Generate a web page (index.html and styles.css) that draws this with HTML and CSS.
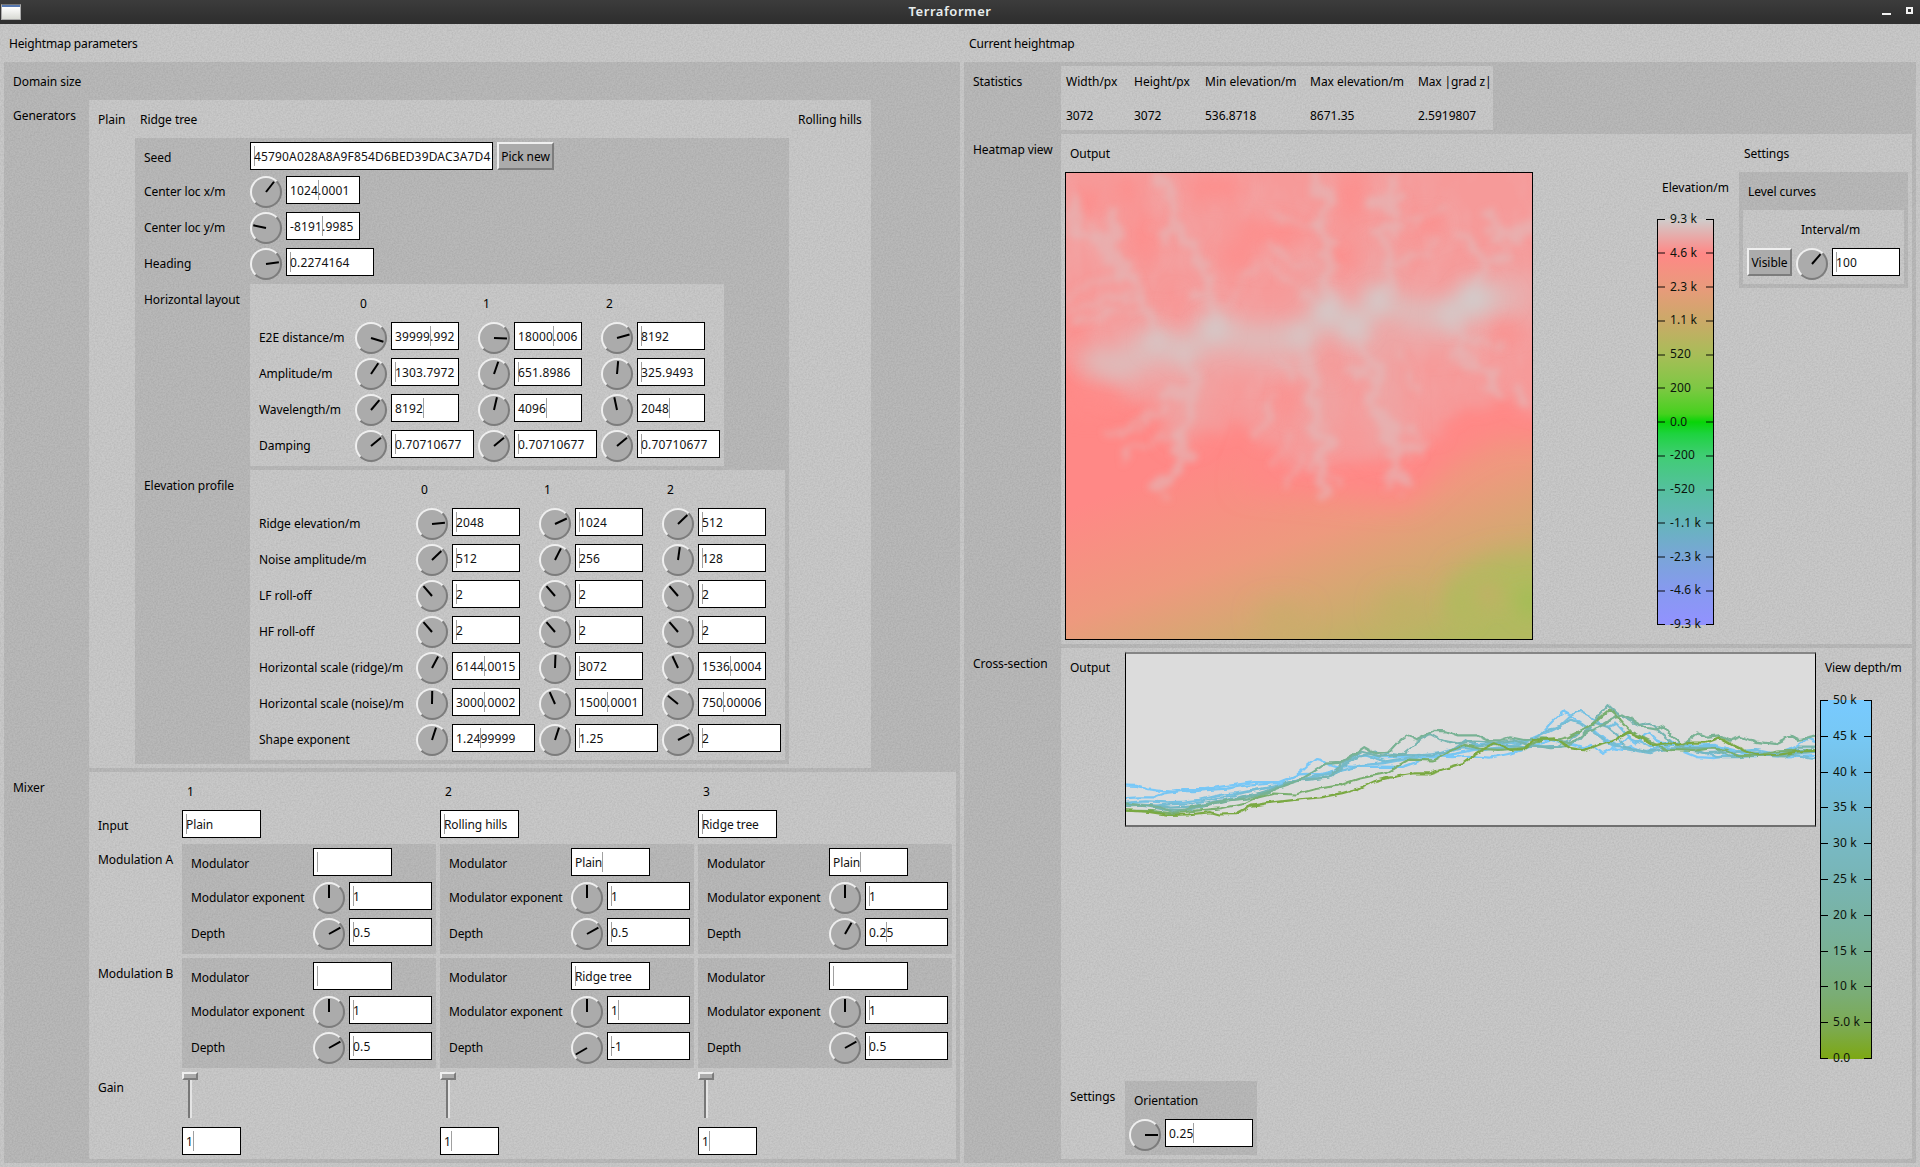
FILE: index.html
```html
<!DOCTYPE html>
<html lang="en">
<head>
<meta charset="utf-8">
<title>Terraformer</title>
<link rel="stylesheet" href="styles.css">
</head>
<body>
<header class="titlebar">
  <span class="appicon"></span>
  <h1>Terraformer</h1>
  <span class="winbtns"><i class="min"></i><i class="max"></i></span>
</header>
<main class="root">
  <section class="side">
    <h2 class="l">Heightmap parameters</h2>
    <div class="dark params">
      <span class="l">Domain size</span><span></span>
      <span class="l">Generators</span>
      <div class="light generators">
        <span class="l">Plain</span><span class="l">Ridge tree</span><span class="l">Rolling hills</span>
        <div class="dark ridge">
          <span class="l">Seed</span><div class="w"><span class="f seed"><b></b>45790A028A8A9F854D6BED39DAC3A7D4</span><button class="btn pick">Pick new</button></div>
          <span class="l">Center loc x/m</span><div class="w"><i class="dial" style="--a:38deg"></i><span class="f w74">1024<b></b>.0001</span></div>
          <span class="l">Center loc y/m</span><div class="w"><i class="dial" style="--a:-78deg"></i><span class="f w74">-8191<b></b>.9985</span></div>
          <span class="l">Heading</span><div class="w"><i class="dial" style="--a:82deg"></i><span class="f w88"><b></b>0.2274164</span></div>
          <span class="l">Horizontal layout</span>
          <div class="light horiz">
            <span></span><span class="l">0</span><span class="l">1</span><span class="l">2</span>
            <span class="l">E2E distance/m</span>
            <div class="w"><i class="dial" style="--a:107deg"></i><span class="f">39999<b></b>.992</span></div>
            <div class="w"><i class="dial" style="--a:92deg"></i><span class="f">18000<b></b>.006</span></div>
            <div class="w"><i class="dial" style="--a:74deg"></i><span class="f"><b></b>8192</span></div>
            <span class="l">Amplitude/m</span>
            <div class="w"><i class="dial" style="--a:34deg"></i><span class="f"><b></b>1303.7972</span></div>
            <div class="w"><i class="dial" style="--a:19deg"></i><span class="f"><b></b>651.8986</span></div>
            <div class="w"><i class="dial" style="--a:5deg"></i><span class="f"><b></b>325.9493</span></div>
            <span class="l">Wavelength/m</span>
            <div class="w"><i class="dial" style="--a:40deg"></i><span class="f">8192<b></b></span></div>
            <div class="w"><i class="dial" style="--a:13deg"></i><span class="f">4096<b></b></span></div>
            <div class="w"><i class="dial" style="--a:-12deg"></i><span class="f">2048<b></b></span></div>
            <span class="l">Damping</span>
            <div class="w"><i class="dial" style="--a:50deg"></i><span class="f w83"><b></b>0.70710677</span></div>
            <div class="w"><i class="dial" style="--a:50deg"></i><span class="f w83"><b></b>0.70710677</span></div>
            <div class="w"><i class="dial" style="--a:50deg"></i><span class="f w83"><b></b>0.70710677</span></div>
          </div>
          <span class="l">Elevation profile</span>
          <div class="light elev">
            <span></span><span class="l">0</span><span class="l">1</span><span class="l">2</span>
            <span class="l">Ridge elevation/m</span>
            <div class="w"><i class="dial" style="--a:84deg"></i><span class="f"><b></b>2048</span></div>
            <div class="w"><i class="dial" style="--a:65deg"></i><span class="f"><b></b>1024</span></div>
            <div class="w"><i class="dial" style="--a:46deg"></i><span class="f"><b></b>512</span></div>
            <span class="l">Noise amplitude/m</span>
            <div class="w"><i class="dial" style="--a:46deg"></i><span class="f"><b></b>512</span></div>
            <div class="w"><i class="dial" style="--a:27deg"></i><span class="f"><b></b>256</span></div>
            <div class="w"><i class="dial" style="--a:8deg"></i><span class="f"><b></b>128</span></div>
            <span class="l">LF roll-off</span>
            <div class="w"><i class="dial" style="--a:-41deg"></i><span class="f"><b></b>2</span></div>
            <div class="w"><i class="dial" style="--a:-41deg"></i><span class="f"><b></b>2</span></div>
            <div class="w"><i class="dial" style="--a:-41deg"></i><span class="f"><b></b>2</span></div>
            <span class="l">HF roll-off</span>
            <div class="w"><i class="dial" style="--a:-41deg"></i><span class="f"><b></b>2</span></div>
            <div class="w"><i class="dial" style="--a:-41deg"></i><span class="f"><b></b>2</span></div>
            <div class="w"><i class="dial" style="--a:-41deg"></i><span class="f"><b></b>2</span></div>
            <span class="l">Horizontal scale (ridge)/m</span>
            <div class="w"><i class="dial" style="--a:28deg"></i><span class="f">6144<b></b>.0015</span></div>
            <div class="w"><i class="dial" style="--a:2deg"></i><span class="f"><b></b>3072</span></div>
            <div class="w"><i class="dial" style="--a:-25deg"></i><span class="f">1536<b></b>.0004</span></div>
            <span class="l">Horizontal scale (noise)/m</span>
            <div class="w"><i class="dial" style="--a:1deg"></i><span class="f">3000<b></b>.0002</span></div>
            <div class="w"><i class="dial" style="--a:-24deg"></i><span class="f">1500<b></b>.0001</span></div>
            <div class="w"><i class="dial" style="--a:-51deg"></i><span class="f">750<b></b>.00006</span></div>
            <span class="l">Shape exponent</span>
            <div class="w"><i class="dial" style="--a:18deg"></i><span class="f w83">1.24<b></b>99999</span></div>
            <div class="w"><i class="dial" style="--a:18deg"></i><span class="f w83"><b></b>1.25</span></div>
            <div class="w"><i class="dial" style="--a:62deg"></i><span class="f w83"><b></b>2</span></div>
          </div>
        </div>
      </div>
      <span class="l">Mixer</span>
      <div class="light mixer">
        <span></span><span class="l">1</span><span class="l">2</span><span class="l">3</span>
        <span class="l">Input</span>
        <div class="w"><span class="f w79 txt"><b></b>Plain</span></div>
        <div class="w"><span class="f w79 txt"><b></b>Rolling hills</span></div>
        <div class="w"><span class="f w79 txt"><b></b>Ridge tree</span></div>
        <span class="l">Modulation A</span>
        <div class="dark mod">
          <span class="l">Modulator</span><div class="w"><span class="f w79 txt"><b></b></span></div>
          <span class="l">Modulator exponent</span><div class="w"><i class="dial" style="--a:0deg"></i><span class="f w83"><b></b>1</span></div>
          <span class="l">Depth</span><div class="w"><i class="dial" style="--a:61deg"></i><span class="f w83"><b></b>0.5</span></div>
        </div>
        <div class="dark mod">
          <span class="l">Modulator</span><div class="w"><span class="f w79 txt">Plain<b></b></span></div>
          <span class="l">Modulator exponent</span><div class="w"><i class="dial" style="--a:0deg"></i><span class="f w83"><b></b>1</span></div>
          <span class="l">Depth</span><div class="w"><i class="dial" style="--a:61deg"></i><span class="f w83"><b></b>0.5</span></div>
        </div>
        <div class="dark mod">
          <span class="l">Modulator</span><div class="w"><span class="f w79 txt">Plain<b></b></span></div>
          <span class="l">Modulator exponent</span><div class="w"><i class="dial" style="--a:0deg"></i><span class="f w83"><b></b>1</span></div>
          <span class="l">Depth</span><div class="w"><i class="dial" style="--a:30deg"></i><span class="f w83">0.2<b></b>5</span></div>
        </div>
        <span class="l">Modulation B</span>
        <div class="dark mod">
          <span class="l">Modulator</span><div class="w"><span class="f w79 txt"><b></b></span></div>
          <span class="l">Modulator exponent</span><div class="w"><i class="dial" style="--a:0deg"></i><span class="f w83"><b></b>1</span></div>
          <span class="l">Depth</span><div class="w"><i class="dial" style="--a:61deg"></i><span class="f w83"><b></b>0.5</span></div>
        </div>
        <div class="dark mod">
          <span class="l">Modulator</span><div class="w"><span class="f w79 txt"><b></b>Ridge tree</span></div>
          <span class="l">Modulator exponent</span><div class="w"><i class="dial" style="--a:0deg"></i><span class="f w83">1<b></b></span></div>
          <span class="l">Depth</span><div class="w"><i class="dial" style="--a:-120deg"></i><span class="f w83"><b></b>-1</span></div>
        </div>
        <div class="dark mod">
          <span class="l">Modulator</span><div class="w"><span class="f w79 txt"><b></b></span></div>
          <span class="l">Modulator exponent</span><div class="w"><i class="dial" style="--a:0deg"></i><span class="f w83"><b></b>1</span></div>
          <span class="l">Depth</span><div class="w"><i class="dial" style="--a:61deg"></i><span class="f w83"><b></b>0.5</span></div>
        </div>
        <span class="l">Gain</span>
        <div class="gain"><i class="knob"></i><i class="track"></i><span class="f w59">1<b></b></span></div>
        <div class="gain"><i class="knob"></i><i class="track"></i><span class="f w59">1<b></b></span></div>
        <div class="gain"><i class="knob"></i><i class="track"></i><span class="f w59">1<b></b></span></div>
      </div>
    </div>
  </section>

  <section class="side">
    <h2 class="l">Current heightmap</h2>
    <div class="dark current">
      <span class="l">Statistics</span>
      <div class="light stats">
        <span>Width/px</span><span>Height/px</span><span>Min elevation/m</span><span>Max elevation/m</span><span>Max |grad z|</span>
        <span>3072</span><span>3072</span><span>536.8718</span><span>8671.35</span><span>2.5919807</span>
      </div>
      <span class="l">Heatmap view</span>
      <div class="light heatview">
        <span class="l">Output</span><span class="l">Settings</span>
        <div class="heatrow">
          <svg class="heatmap" viewBox="33 39 1398 1398">
            <defs>
              <linearGradient id="land" gradientUnits="userSpaceOnUse" x1="0" y1="1060" x2="250" y2="1776">
                <stop offset="0" stop-color="#ff8886"/><stop offset=".42" stop-color="#ee997e"/>
                <stop offset=".64" stop-color="#d8a673"/><stop offset=".84" stop-color="#c3b068"/><stop offset="1" stop-color="#b2b960"/>
              </linearGradient>
              <filter id="rough" x="-50" y="-50" width="1570" height="1570" filterUnits="userSpaceOnUse">
                <feTurbulence type="fractalNoise" baseFrequency=".02" numOctaves="4" seed="7" result="n"/>
                <feDisplacementMap in="SourceGraphic" in2="n" scale="75" xChannelSelector="R" yChannelSelector="G"/>
                <feGaussianBlur stdDeviation="10"/>
              </filter>
              <filter id="edge" x="-100" y="-100" width="1700" height="1700" filterUnits="userSpaceOnUse">
                <feTurbulence type="fractalNoise" baseFrequency=".014" numOctaves="4" seed="3" result="n"/>
                <feDisplacementMap in="SourceGraphic" in2="n" scale="120" xChannelSelector="R" yChannelSelector="G"/>
                <feGaussianBlur stdDeviation="20"/>
              </filter>
              <filter id="soft" x="-100" y="-100" width="1700" height="1700" filterUnits="userSpaceOnUse"><feGaussianBlur stdDeviation="28"/></filter>
              <filter id="softer" x="-200" y="-200" width="1900" height="1900" filterUnits="userSpaceOnUse"><feGaussianBlur stdDeviation="40"/></filter>
              <filter id="mottle" x="-100" y="-100" width="1700" height="1700" filterUnits="userSpaceOnUse">
                <feGaussianBlur in="SourceGraphic" stdDeviation="45" result="m"/>
                <feTurbulence type="fractalNoise" baseFrequency=".012 .006" numOctaves="3" seed="11"/>
                <feColorMatrix values="0 0 0 0 .85  0 0 0 0 .45  0 0 0 0 .45  2.4 0 0 0 -.9"/>
                <feComposite in2="m" operator="in"/>
              </filter>
            </defs>
            <rect x="30" y="36" width="1404" height="1404" fill="url(#land)"/>
            <g filter="url(#softer)">
              <path d="M560 980 850 1010 1060 1030 1200 900 1330 830 1540 840 1540 600 1000 690 600 850Z" fill="#ff8886"/>
              <path d="M1200 1240 1330 1190 1540 1180 1540 1400 1330 1350 1210 1400Z" fill="#b2ba5e"/>
              <ellipse cx="680" cy="1370" rx="70" ry="30" fill="#c7ad69"/>
              <ellipse cx="1040" cy="1340" rx="60" ry="35" fill="#bdb264"/>
            </g>
            <g filter="url(#soft)">
              <ellipse cx="1425" cy="1325" rx="40" ry="45" fill="#a2be54"/>
              <ellipse cx="1300" cy="1300" rx="30" ry="28" fill="#caaa6b"/>
              <ellipse cx="1215" cy="1330" rx="40" ry="60" fill="#b3b95e"/>
            </g>
            <path d="M-40 -40H1540V780L1350 720 1260 750 1130 820 1080 880 900 890 840 930 720 920 640 850 480 800 390 840 250 730 120 680-40 580Z" fill="#f69a99" filter="url(#edge)"/>
            <path d="M-40 -40H1540V620L1300 650 1100 770 700 770 480 700 200 640-40 500Z" fill="#fff" filter="url(#mottle)" opacity=".3"/>
            <g filter="url(#softer)" fill="none" stroke-linecap="round" stroke-linejoin="round">
              <path d="M190 620 305 560 390 590 480 530 600 555 740 550 820 480 900 520 970 450 1080 480 1185 480 1260 430 1390 410" stroke="#e9aeae" stroke-width="150"/>
              <path d="M780 350 800 800M980 300 1000 850M420 620 390 800" stroke="#eda6a5" stroke-width="80"/>
            </g>
            <g filter="url(#soft)" fill="#ff8b89" opacity=".85">
              <ellipse cx="480" cy="80" rx="90" ry="40"/><ellipse cx="650" cy="220" rx="110" ry="40"/><ellipse cx="270" cy="230" rx="42" ry="80"/>
              <ellipse cx="890" cy="110" rx="35" ry="80"/><ellipse cx="855" cy="290" rx="40" ry="40"/><ellipse cx="100" cy="130" rx="45" ry="40"/>
              <ellipse cx="1110" cy="190" rx="60" ry="25"/><ellipse cx="60" cy="500" rx="30" ry="50"/><ellipse cx="545" cy="290" rx="50" ry="35"/>
              <ellipse cx="365" cy="440" rx="16" ry="55"/><ellipse cx="828" cy="600" rx="14" ry="65"/><ellipse cx="220" cy="90" rx="30" ry="50"/>
              <ellipse cx="100" cy="720" rx="110" ry="50"/><ellipse cx="700" cy="720" rx="20" ry="60"/><ellipse cx="1350" cy="510" rx="35" ry="35"/>
            </g>
            <g filter="url(#soft)" fill="none" stroke-linecap="round" stroke-linejoin="round">
              <path d="M110 600 200 620 305 550 390 580 480 510 600 540 740 530 820 455 900 505 970 425 1080 460 1185 465 1260 415 1340 415" stroke="#dcbdbc" stroke-width="50"/>
            </g>
            <g filter="url(#rough)" fill="none" stroke="#e3b8b7" stroke-linecap="round" stroke-linejoin="round">
              <g stroke-width="34" opacity=".6">
                <path d="M305 50 360 110 370 210 430 290 460 370 480 510M350 215 320 225M480 420 420 410"/>
                <path d="M50 120 60 200 150 250 170 320 250 370 290 480 305 545M180 170 170 320M205 290 200 350"/>
                <path d="M770 50 815 130 790 200 830 250 810 350 820 460"/>
                <path d="M1010 60 1000 140 1020 190 960 220 1000 270 1010 350 975 425M960 130 1050 120"/>
                <path d="M1230 220 1280 310 1260 415M1430 180 1380 240 1320 220 1310 160M1280 310 1370 290"/>
                <path d="M390 580 420 660 410 740 370 830 390 890 350 960 310 970M420 690 330 700M370 870 420 890"/>
                <path d="M740 530 760 620 780 740 770 800 840 850 790 900 810 990M720 640 690 620"/>
                <path d="M900 505 940 590 970 670 950 730 1010 810 1020 920 1060 980M900 640 940 600M1010 860 1100 880"/>
                <path d="M1185 465 1230 540 1220 600 1310 640 1320 700M1390 700 1410 720"/>
              </g>
              <g stroke-width="16" opacity=".5">
                <path d="M640 250 720 320 780 330M640 320 700 370 770 410M650 160 740 200 790 200M600 310 560 380 500 440M1150 230 1100 290 1020 310M1150 150 1080 190 1020 190"/>
                <path d="M40 410 120 370 200 350M40 460 150 410 240 410M60 490 160 450 270 460"/>
                <path d="M660 700 630 780 600 830M330 740 220 810 150 830M360 830 270 850 210 890M700 830 650 930M740 900 690 980M820 950 860 970M1010 930 990 980M1060 810 1130 850M320 1000 330 1020"/>
                <path d="M1040 570 1060 640 1090 700M1250 540 1350 560"/>
              </g>
            </g>
            <g filter="url(#soft)" fill="#d0cecd">
              <circle cx="305" cy="542" r="28"/><circle cx="388" cy="578" r="24"/><circle cx="480" cy="505" r="36"/><circle cx="735" cy="528" r="28"/><circle cx="818" cy="450" r="38"/>
              <circle cx="898" cy="502" r="34"/><circle cx="970" cy="418" r="36"/><circle cx="1185" cy="465" r="32"/><circle cx="1258" cy="415" r="44"/>
            </g>
          </svg>
          <div class="legend">
            <span class="cap">Elevation/m</span>
            <div class="bar elevbar">
              <span class="t"><u>9.3 k</u></span><span class="t"><u>4.6 k</u></span><span class="t"><u>2.3 k</u></span><span class="t"><u>1.1 k</u></span><span class="t"><u>520</u></span><span class="t"><u>200</u></span><span class="t"><u>0.0</u></span><span class="t"><u>-200</u></span><span class="t"><u>-520</u></span><span class="t"><u>-1.1 k</u></span><span class="t"><u>-2.3 k</u></span><span class="t"><u>-4.6 k</u></span><span class="t"><u>-9.3 k</u></span>
            </div>
          </div>
        </div>
        <div class="dark level">
          <span class="l">Level curves</span>
          <div class="light interval">
            <span></span><span class="cap">Interval/m</span>
            <button class="btn">Visible</button>
            <div class="w"><i class="dial" style="--a:41deg"></i><span class="f"><b></b>100</span></div>
          </div>
        </div>
      </div>
      <span class="l">Cross-section</span>
      <div class="light cross">
        <span class="l">Output</span>
        <div class="crossrow">
          <svg class="chart" viewBox="127 38 1252 521" preserveAspectRatio="none">
            <defs>
              <filter id="jag" x="100" y="0" width="1300" height="600" filterUnits="userSpaceOnUse">
                <feTurbulence type="fractalNoise" baseFrequency=".05" numOctaves="2" seed="5" result="n"/>
                <feDisplacementMap in="SourceGraphic" in2="n" scale="13" xChannelSelector="R" yChannelSelector="G"/>
              </filter>
            </defs>
            <g fill="none" stroke-width="2.2" stroke-linejoin="round" filter="url(#jag)">
              <path stroke="#78c8f8" d="M118 438 145 440 165 450 190 455 215 457 240 450 270 450 300 442 330 435 360 428 405 428 420 418 440 403 455 380 472 358 480 360 495 375 515 385 530 370 545 350 560 348 575 352 600 352 630 350 660 345 690 350 720 352 750 348 790 354 830 340 860 320 880 310 900 300 925 310 945 318 960 325 972 315 992 342 1010 325 1030 330 1045 318 1062 335 1085 330 1115 300 1140 335 1165 352 1195 355 1230 345 1270 350 1300 340 1330 350 1390 345"/>
              <path stroke="#77c6f3" d="M118 478 150 475 175 475 195 463 230 455 250 456 280 452 310 448 340 440 365 437 390 432 410 432 425 415 440 405 455 403 480 404 500 398 520 380 545 382 580 381 630 382 650 370 670 355 700 350 730 340 760 330 800 325 835 320 860 300 880 285 895 255 910 230 922 213 935 225 955 250 970 268 985 280 1000 300 1015 320 1028 310 1040 290 1055 310 1070 285 1078 278 1090 300 1110 315 1150 318 1195 315 1230 330 1260 345 1310 350 1345 320 1365 296 1390 310"/>
              <path stroke="#76c1e2" d="M118 492 165 487 200 490 230 488 260 482 300 466 330 462 370 450 400 442 425 428 460 415 500 400 530 388 560 376 600 370 640 358 680 348 720 330 750 318 800 310 840 305 875 292 895 275 915 258 940 220 953 212 970 225 985 245 1005 260 1018 250 1040 290 1060 305 1090 325 1130 310 1165 320 1190 318 1230 335 1270 330 1300 340 1340 330 1390 330"/>
              <path stroke="#76bdd4" d="M118 498 170 502 205 496 250 492 290 478 325 468 355 455 400 440 440 422 475 410 510 400 530 365 560 345 600 365 650 350 700 340 740 325 780 330 830 315 870 300 890 270 912 262 935 238 955 250 975 275 1000 305 1035 328 1080 340 1110 325 1160 330 1200 352 1240 352 1290 345 1330 342 1390 358"/>
              <path stroke="#75b8c4" d="M118 494 170 498 210 506 250 502 290 488 330 476 370 462 410 438 450 422 500 412 520 380 545 355 580 335 620 345 680 348 715 335 745 300 765 320 800 312 850 322 910 318 930 300 955 270 980 248 1002 260 1020 285 1030 320 1075 335 1100 330 1130 325 1180 340 1250 335 1310 345 1390 335"/>
              <path stroke="#77b5b0" d="M118 503 160 500 200 513 240 512 290 492 330 478 380 458 420 430 455 420 495 415 520 370 555 335 590 350 630 345 645 325 660 300 680 282 700 300 725 310 760 305 800 308 830 300 860 315 900 325 930 318 950 300 975 250 1002 194 1015 215 1035 232 1060 255 1080 248 1100 280 1120 310 1145 325 1195 325 1225 350 1280 348 1325 350 1350 320 1390 320"/>
              <path stroke="#78b294" d="M118 492 150 498 190 505 215 520 260 500 310 484 350 478 380 462 410 442 440 425 465 400 490 372 515 370 540 345 560 322 580 340 605 335 620 308 637 287 655 298 685 272 710 274 730 286 765 286 785 302 810 300 825 292 850 300 885 295 910 298 930 310 945 300 965 275 985 262 1005 242 1030 222 1050 240 1070 262 1090 268 1105 258 1120 290 1140 315 1165 280 1180 290 1205 286 1225 302 1245 290 1270 305 1305 312 1335 287 1350 300 1390 286"/>
              <path stroke="#79af70" d="M118 515 175 517 215 524 250 516 300 508 340 495 365 475 395 463 435 466 470 450 510 440 550 418 600 400 640 360 685 362 710 340 740 315 770 326 800 330 850 325 880 300 910 300 930 290 955 270 980 245 1006 208 1022 232 1045 275 1075 300 1110 330 1160 333 1190 326 1215 330 1240 350 1280 345 1310 335 1390 330"/>
              <path stroke="#7aa943" d="M118 514 165 518 205 528 240 527 280 520 295 527 325 526 355 500 395 490 430 483 480 475 520 462 550 448 580 425 605 415 650 402 680 402 710 385 740 370 760 345 780 325 797 310 825 330 850 328 870 300 905 295 935 325 960 331 985 315 1015 300 1040 275 1060 290 1085 316 1110 310 1130 314 1155 308 1180 308 1205 292 1230 315 1255 335 1275 347 1310 345 1350 335 1390 332"/>
            </g>
          </svg>
          <div class="legend2">
            <span class="l">View depth/m</span>
            <div class="bar depthbar">
              <span class="t"><u>50 k</u></span><span class="t"><u>45 k</u></span><span class="t"><u>40 k</u></span><span class="t"><u>35 k</u></span><span class="t"><u>30 k</u></span><span class="t"><u>25 k</u></span><span class="t"><u>20 k</u></span><span class="t"><u>15 k</u></span><span class="t"><u>10 k</u></span><span class="t"><u>5.0 k</u></span><span class="t"><u>0.0</u></span>
            </div>
          </div>
        </div>
        <span class="l">Settings</span>
        <div class="dark orient">
          <span class="l">Orientation</span>
          <div class="w"><i class="dial" style="--a:90deg"></i><span class="f w88">0.25<b></b></span></div>
        </div>
      </div>
    </div>
  </section>
</main>
</body>
</html>
```
FILE: styles.css
```css
:root {
  --grain: url("data:image/svg+xml,%3Csvg xmlns='http://www.w3.org/2000/svg' width='256' height='256'%3E%3Cfilter id='g' x='0' y='0' width='100%25' height='100%25'%3E%3CfeTurbulence type='fractalNoise' baseFrequency='.6' numOctaves='3' stitchTiles='stitch'/%3E%3CfeColorMatrix values='0 0 0 0 0 0 0 0 0 0 0 0 0 0 0 .13 0 0 0 -.04'/%3E%3C/filter%3E%3Crect width='256' height='256' filter='url(%23g)'/%3E%3C/svg%3E");
}
* { box-sizing: border-box; }
body {
  margin: 0;
  width: 1920px;
  height: 1167px;
  overflow: hidden;
  font: 12px/16px "Noto Sans", "Open Sans", sans-serif;
  color: #000;
  background: var(--grain) #c9c9c9;
}
.titlebar {
  height: 24px;
  display: flex;
  align-items: center;
  justify-content: space-between;
  padding: 0 7px 0 1px;
  background: linear-gradient(#3c3c3c, #303030 80%);
  color: #e9eeee;
}
.titlebar h1 { margin: 0 14px 2px 0; font-size: 13px; font-weight: 600; letter-spacing: .55px; }
.appicon { width: 20px; height: 16px; margin-right: 11px; border: 1px solid #aaa; border-top-color: #777; background: linear-gradient(#5577b0 0 2px, #fff 2px, #d8dad4); }
.winbtns { display: flex; align-items: flex-end; gap: 15px; height: 7px; margin-bottom: 3px; }
.min { width: 9px; height: 2px; background: #f2f2f2; margin-bottom: -1px; }
.max { width: 7px; height: 7px; border: 2px solid #f2f2f2; }

.root { display: grid; grid-template-columns: 960px 956px; height: 1143px; }
.side { display: grid; grid-template-rows: 34px 1105px; }
.dark, .light { display: grid; margin: 4px 0 0 4px; padding: 0 4px 4px 0; align-content: start; align-items: start; }
.dark { background: var(--grain) #b9b9b9; }
.light { background: var(--grain) #c9c9c9; }
.l { margin: 4px 0 0 4px; padding-left: 5px; height: 30px; font-size: 12px; font-weight: 400; line-height: 32px; white-space: nowrap; letter-spacing: -.05px; }
h2.l { letter-spacing: -.15px; }

.w { display: flex; gap: 4px; margin: 4px 0 0 4px; }
.f {
  display: flex;
  align-items: center;
  width: 68px;
  height: 28px;
  padding: 1px 0 0 3px;
  border: 1px solid #000;
  background: #fff;
  white-space: pre;
  color: #111;
  letter-spacing: .15px;
}
.f b { flex: none; width: 1px; height: 20px; margin: -1px -1px 0 0; background: #a0a0a0; }
.txt { letter-spacing: -.1px; }
.w59 { width: 59px; }
.w74 { width: 74px; }
.w79 { width: 79px; }
.w83 { width: 83px; }
.w88 { width: 88px; }
.seed { width: 243px; }
.btn {
  width: 45px;
  height: 28px;
  padding: 1px 0 0;
  border: 2px solid;
  border-color: #efefef #7c7c7c #7c7c7c #efefef;
  background: #ababab;
  color: #000;
  font: inherit;
  letter-spacing: -.05px;
  white-space: nowrap;
}
.pick { width: 57px; }
.dial {
  position: relative;
  flex: none;
  width: 32px;
  height: 32px;
  border: 2px solid;
  border-color: #efefef #7c7c7c #7c7c7c #efefef;
  border-radius: 50%;
  background: #ababab;
}
.dial::after {
  content: "";
  position: absolute;
  left: 13px;
  top: 1px;
  width: 2px;
  height: 13px;
  background: #000;
  transform: rotate(var(--a));
  transform-origin: 50% 100%;
}

.params { grid-template-columns: 81px 871px; grid-template-rows: 34px 672px 391px; }
.generators { grid-template-columns: 42px 658px 78px; grid-template-rows: 34px 630px; width: 782px; height: 668px; }
.ridge { grid-column: 2; grid-template-columns: 111px 539px; grid-template-rows: 34px 36px 36px 36px 186px 294px; height: 626px; }
.horiz { grid-template-columns: 101px repeat(3, 123px); grid-template-rows: 34px repeat(4, 36px); width: 474px; }
.elev { grid-template-columns: 162px repeat(3, 123px); grid-template-rows: 34px repeat(7, 36px); }
.mixer { grid-template-columns: 89px repeat(3, 258px); grid-template-rows: 34px 34px 114px 114px 87px; height: 387px; }
.mod { grid-template-columns: 127px 123px; grid-template-rows: 34px 36px 36px; }
.mod .l { letter-spacing: -.13px; }
.gain { display: flex; flex-direction: column; margin: 4px 0 0 4px; }
.knob { width: 16px; height: 8px; border: 2px solid; border-color: #efefef #7c7c7c #7c7c7c #efefef; background: #ababab; }
.track { width: 4px; height: 38px; margin: 0 0 9px 6px; border-left: 2px solid #777; border-right: 2px solid #e4e4e4; }

.current { grid-template-columns: 93px 855px; grid-template-rows: 68px 514px 515px; }
.stats { grid-template-columns: 68px 71px 105px 108px 75px; row-gap: 4px; width: 432px; padding: 0 0 0 5px; }
.stats span { height: 30px; line-height: 32px; white-space: nowrap; }
.stats span:nth-child(5) { letter-spacing: -.15px; }
.heatview { grid-template-columns: 674px 173px; grid-template-rows: 34px 472px; }
.heatrow { display: flex; margin: 4px 0 0 4px; }
.heatmap { width: 468px; height: 468px; border: 1px solid #000; }
.legend { margin-left: 124px; width: 71px; }
.cap { display: block; height: 47px; padding-left: 5px; line-height: 32px; white-space: nowrap; }
.bar { display: flex; flex-direction: column; justify-content: space-between; border: solid #000; border-width: 0 1px; }
.t { display: flex; align-items: center; height: 1px; white-space: pre; color: #0c140c; letter-spacing: .1px; }
.t u { margin-top: -1px; text-decoration: none; }
.t::before { content: ""; width: 7px; height: 2px; margin-right: 5px; background: #0007; }
.t::after { content: ""; width: 7px; height: 2px; margin-left: auto; background: #0007; }
.t:first-child::before, .t:first-child::after, .t:last-child::before, .t:last-child::after { height: 1px; background: #000; }
.elevbar {
  width: 57px;
  height: 406px;
  background: linear-gradient(#cfcdcc, #ff8886 8.5%, #e99a7c 16.7%, #cba968 25%, #a8bd58 33.3%, #7dc843 41.7%, #46d11e 48%, #08d408 50%, #1ed340 53%, #40cd74 58.3%, #55c09e 66.7%, #66b5bc 75%, #7aa5d8 83.3%, #8799f0 91.7%, #9292ff);
}
.level { grid-template-rows: 34px 78px; }
.interval { grid-template-columns: 49px 108px; grid-template-rows: 34px 36px; }
.interval .cap { height: 30px; padding-left: 9px; margin-top: 4px; }
.interval .btn { margin: 4px 0 0 4px; }

.cross { grid-template-columns: 60px 787px; grid-template-rows: 429px 78px; }
.crossrow { display: flex; margin: 4px 0 0 4px; }
.chart { width: 691px; height: 175px; border: 1px solid #000; border-top: 2px solid #858585; border-bottom: 2px solid #707070; background: #dcdcdc; }
.chart path { vector-effect: non-scaling-stroke; }
.legend2 { display: flex; flex-direction: column; margin-left: 4px; }
.legend2 .l { margin: 0 0 18px; letter-spacing: -.15px; }
.depthbar { width: 52px; height: 359px; background: linear-gradient(#78caff, #77c8f5 10%, #76c1e4 20%, #78bbcb 35%, #78b5b5 50%, #79b197 68%, #7aad75 82%, #7caa4c 92%, #7da812); }
.depthbar .t::before, .depthbar .t::after { height: 1px; background: #000; }
.orient { width: 132px; grid-template-rows: 34px 36px; }
```
